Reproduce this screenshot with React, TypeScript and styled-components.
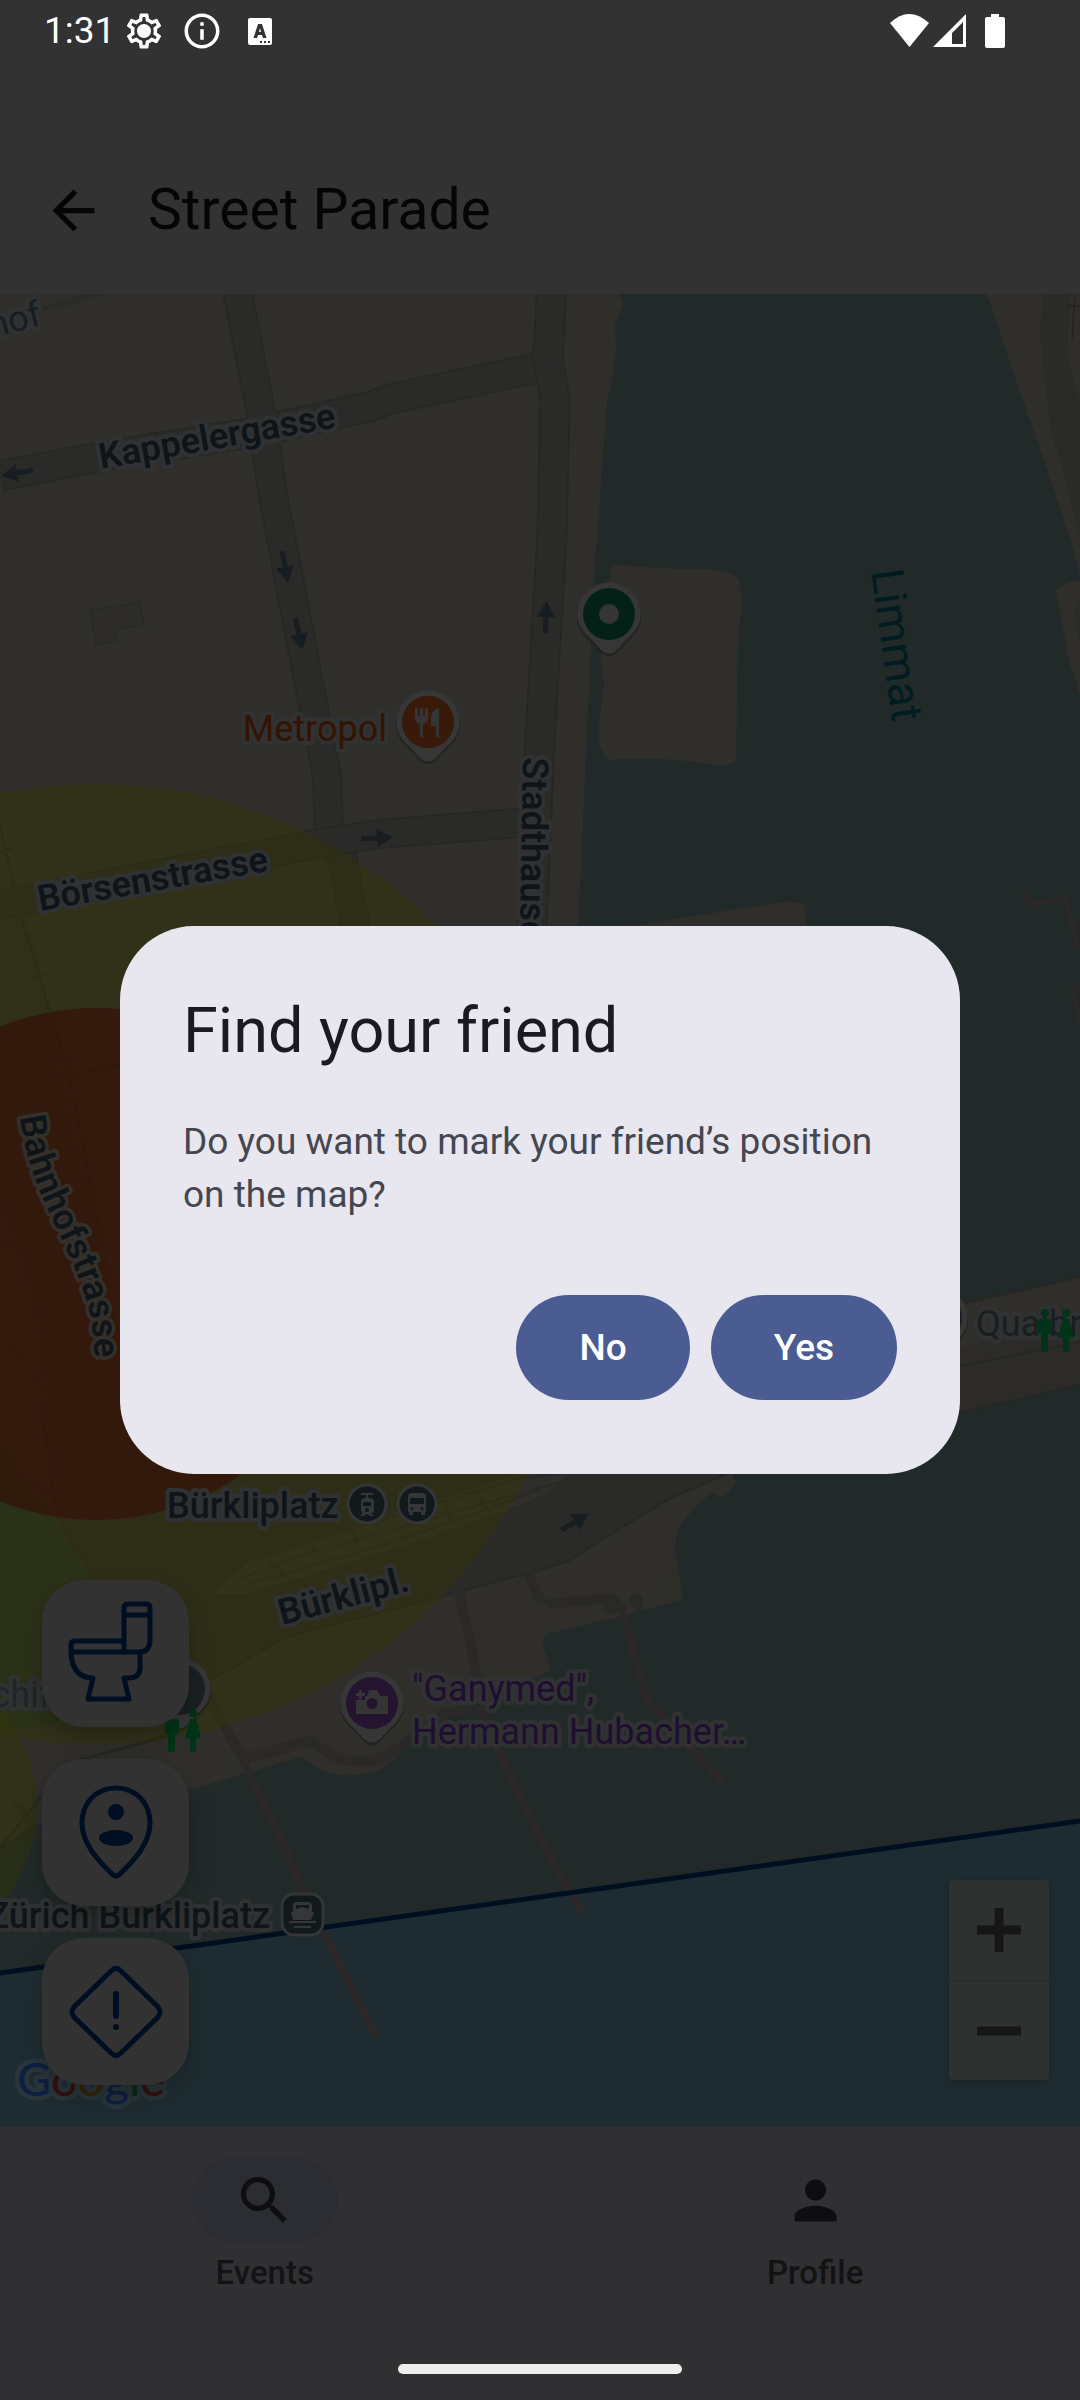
import React from "react";
import styled, { createGlobalStyle } from "styled-components";
import { MdArrowBack, MdInfoOutline, MdOutlineSettings, MdPerson, MdSearch } from "react-icons/md";

const color = {
  surface: "#323232",
  navSurface: "#303032",
  ink: "#050506",
  land: "#302e2b",
  water: "#212a29",
  lake: "#1e2c31",
  road: "#2a2a29",
  roadEdge: "#262723",
  path: "#2a2928",
  pier: "#2b2827",
  halo: "#303132",
  label: "#0e1418",
  primary: "#4a5c92",
  dialog: "#e8e6ef",
  icon: "#000e22",
};

const GlobalStyle = createGlobalStyle`
  *, *::before, *::after { box-sizing: border-box; }
  body {
    margin: 0;
    background: ${color.surface};
    color: ${color.ink};
    font-family: Roboto, "Noto Sans", sans-serif;
  }
  button { font: inherit; border: 0; padding: 0; margin: 0; background: none; cursor: pointer; }
  h1, h2, p { margin: 0; font-weight: 400; }
  svg { display: block; }
`;

const Screen = styled.div`
  min-height: 100vh;
  display: flex;
  flex-direction: column;
  background: ${color.surface};
`;

const StatusBar = styled.div`
  height: 126px;
  padding: 10px 74px 0 44px;
  display: flex;
  justify-content: space-between;
  align-items: flex-start;
  color: #fff;
`;

const StatusGroup = styled.div<{ $gap: number }>`
  display: flex;
  align-items: center;
  gap: ${(p) => p.$gap}px;
  height: 42px;
`;

const Clock = styled.span`
  font-size: 37px;
  line-height: 42px;
`;

const TopBar = styled.header`
  height: 168px;
  padding: 0 10px;
  display: flex;
  align-items: center;
  gap: 12px;
`;

const BackButton = styled.button`
  width: 126px;
  height: 126px;
  display: grid;
  place-items: center;
  color: ${color.ink};
`;

const Title = styled.h1`
  font-size: 57px;
  line-height: 74px;
`;

const MapArea = styled.main`
  position: relative;
  flex: 1 1 0;
  min-height: 1200px;
  overflow: hidden;
  background: ${color.water};
`;

const MapCanvas = styled.svg`
  position: absolute;
  inset: 0;
  width: 100%;
  height: 100%;
`;

const FabColumn = styled.div`
  position: absolute;
  left: 42px;
  bottom: 42px;
  display: flex;
  flex-direction: column;
  gap: 32px;
`;

const Fab = styled.button`
  width: 147px;
  height: 147px;
  border-radius: 42px;
  background: ${color.surface};
  box-shadow: 0 10px 22px rgba(0, 0, 0, 0.22);
  color: ${color.icon};
`;

const ZoomControl = styled.div`
  position: absolute;
  right: 31px;
  bottom: 47px;
  width: 100px;
  border-radius: 4px;
  background: #2d3130;
  box-shadow: 0 2px 6px rgba(0, 0, 0, 0.25);
  display: flex;
  flex-direction: column;
`;

const ZoomButton = styled.button`
  height: 100px;
  display: grid;
  place-items: center;
  color: #161616;

  & + & {
    border-top: 2px solid #292b2c;
  }
`;

const NavBar = styled.nav`
  height: 273px;
  padding-top: 31px;
  background: ${color.navSurface};
  display: flex;
  flex-direction: column;
  justify-content: space-between;
  align-items: center;
`;

const NavItems = styled.div`
  width: 100%;
  display: flex;
  gap: 21px;
`;

const NavItem = styled.a`
  flex: 1;
  display: flex;
  flex-direction: column;
  align-items: center;
  gap: 10px;
  color: #121315;
  text-decoration: none;
  font-size: 33px;
  font-weight: 500;
  line-height: 42px;
`;

const NavPill = styled.span<{ $active?: boolean }>`
  width: 147px;
  height: 84px;
  border-radius: 42px;
  display: grid;
  place-items: center;
  background: ${(p) => (p.$active ? "#2c2d32" : "transparent")};
  color: #0d0e11;
`;

const HomeHandle = styled.div`
  width: 284px;
  height: 10px;
  margin-bottom: 26px;
  border-radius: 5px;
  background: #eeeeee;
`;

const DialogLayer = styled.div`
  position: fixed;
  inset: 0;
  display: grid;
  place-items: center;
  padding: 0 120px;
`;

const Dialog = styled.section`
  width: 100%;
  max-width: 1470px;
  border-radius: 74px;
  padding: 63px 63px 74px;
  background: ${color.dialog};
  display: flex;
  flex-direction: column;
`;

const DialogTitle = styled.h2`
  font-size: 63px;
  line-height: 84px;
  color: #1a1b21;
`;

const DialogText = styled.p`
  margin: 42px 0 74px;
  font-size: 37px;
  line-height: 53px;
  color: #45464f;
`;

const DialogActions = styled.div`
  display: flex;
  justify-content: flex-end;
  gap: 21px;
`;

const DialogButton = styled.button`
  height: 105px;
  padding: 0 63px;
  border-radius: 53px;
  background: ${color.primary};
  color: #fff;
  font-size: 37px;
  font-weight: 500;
`;

type Point = [number, number];
const pts = (list: Point[]) => list.map((p) => p.join(",")).join(" ");

function Street({ points, width }: { points: Point[]; width: number }) {
  return (
    <g fill="none" strokeLinejoin="round">
      <polyline points={pts(points)} stroke={color.roadEdge} strokeWidth={width + 2} />
      <polyline points={pts(points)} stroke={color.road} strokeWidth={width - 1} />
    </g>
  );
}

function Label({
  x,
  y,
  angle = 0,
  size = 36,
  weight = 500,
  fill = color.label,
  anchor = "start",
  halo = color.halo,
  children,
}: {
  x: number;
  y: number;
  angle?: number;
  size?: number;
  weight?: number;
  fill?: string;
  anchor?: "start" | "middle" | "end";
  halo?: string;
  children: React.ReactNode;
}) {
  return (
    <text
      transform={`translate(${x} ${y}) rotate(${angle})`}
      fontSize={size}
      fontWeight={weight}
      fill={fill}
      textAnchor={anchor}
      stroke={halo}
      strokeWidth={8}
      strokeLinejoin="round"
      paintOrder="stroke"
    >
      {children}
    </text>
  );
}

function Arrow({ x, y, angle }: { x: number; y: number; angle: number }) {
  return (
    <path
      transform={`translate(${x} ${y}) rotate(${angle})`}
      d="M-16-2.500H0V-9L16 0L0 9V2.500H-16Z"
      fill="#171d21"
    />
  );
}

function Pin({ x, y, fill, children }: { x: number; y: number; fill: string; children?: React.ReactNode }) {
  return (
    <g transform={`translate(${x} ${y})`}>
      <path d="M-32 3A32 32 0 1 1 32 3C32 14 25 22 18 28L8 39Q0 46-8 39L-18 28C-25 22-32 14-32 3Z" fill="#1b1c1b" opacity="0.6" />
      <path d="M-31.500 0A31.500 31.500 0 1 1 31.500 0C31.500 12 25 19 18 25L8 36Q0 43-8 36L-18 25C-25 19-31.500 12-31.500 0Z" fill="#363637" />
      <circle r="26" fill={fill} />
      {children}
    </g>
  );
}

function Restroom({ x, y }: { x: number; y: number }) {
  return (
    <g transform={`translate(${x} ${y})`} fill="#003418">
      <circle cx="7" cy="4" r="4" />
      <path d="M2 10H12Q14 10 14 12V25H10V43H3V25H0V12Q0 10 2 10Z" />
      <circle cx="28" cy="4" r="4" />
      <path d="M25 10H31L36 29H31V43H25V29H20Z" />
    </g>
  );
}

function CityMap() {
  return (
    <MapCanvas viewBox="0 294 1080 1833" preserveAspectRatio="xMidYMid slice" role="img" aria-label="Map of Zürich Bürkliplatz">
      <rect y="0" width="1080" height="2400" fill={color.water} />

      {/* West bank */}
      <path
        fill={color.land}
        d="M0 294H619L623 305L615 325L616 351L613 376L607 402L594 576L583 821L578 930V1200L640 1380L732 1475L736 1483L723 1498L712 1492L693 1509L677 1530L675 1550L683 1600L643 1610L609 1619L564 1630L550 1633Q543 1635 543 1644L551 1670L520 1684L480 1695L445 1715L410 1746L382 1769Q350 1782 320 1769L300 1757L189 1790L60 1822L30 1826L0 1848Z"
      />
      {/* East bank and jetties */}
      <path fill={color.land} d="M986 294L991 306L1012 368L1050 478L1074 551L1080 578V294Z" />
      <path fill={color.land} d="M1080 580L1067 583L1056 590L1069 661L1080 694Z" />
      <path
        fill={color.land}
        d="M613 565L678 569H709Q730 571 738 578L742 596L738 649L736 759Q732 766 716 765L678 760Q640 757 609 760Q603 758 598 735L604 686L601 659L606 600L610 578Z"
      />
      <path fill={color.land} d="M620 928L781 902H794Q804 902 805 908L808 940H620Z" />

      {/* Lake */}
      <path fill={color.lake} d="M0 1973L1080 1821V2400H0Z" />

      {/* Parks */}
      <path fill="#262f29" d="M0 1440L40 1500L95 1580L150 1640L170 1690L60 1722L0 1735Z" />
      <path fill="#2d2e26" d="M664 1602Q668 1580 677 1565L683 1600Z" />

      {/* Quay bridge */}
      <path fill={color.land} d="M940 1310L1080 1276V1384L940 1418Z" />
      <path fill="#2c2b29" d="M940 1352L1080 1322V1384L940 1418Z" />
      <g stroke="#272623" strokeWidth="2" fill="none">
        <path d="M940 1309L1080 1277M940 1370L1080 1342M940 1418L1080 1384" />
      </g>

      {/* Streets */}
      <path d="M40 308L80 294H110L40 312Z" fill={color.road} />
      <path d="M1043 294L1040 330L1044 372L1050 425L1080 535V400L1068 360L1070 294Z" fill={color.road} />
      <path d="M1075 294L1072 340M1068 306H1080" stroke="#262522" strokeWidth="2" />
      <path d="M1080 600Q1070 610 1080 640Z" fill={color.road} />
      <Street width={29} points={[[0, 476], [93, 458], [255, 432], [372, 406], [390, 399], [550, 365]]} />
      <Street width={28} points={[[235, 280], [261, 412], [272, 490], [300, 637], [327, 776], [329, 833], [342, 857], [360, 950]]} />
      <Street width={28} points={[[-10, 908], [14, 902], [315, 844], [379, 834], [530, 822]]} />
      <Street width={29} points={[[552, 280], [548, 360], [555, 400], [552, 535], [540, 739], [531, 950]]} />
      <path fill={color.road} d="M250 408L260 405L278 414L276 425L260 432L248 428ZM322 838L340 834L350 842L346 852L330 852ZM538 356L548 352L558 368L548 382L536 372Z" />
      <path fill="#2d2c29" stroke={color.roadEdge} d="M90 611L140 602L144 625L114 630L117 642L96 645Z" />

      {/* Bahnhofstrasse corridor */}
      <path d="M8 930Q8 914 28 914L62 1080L108 1290L140 1400L230 1474L60 1474L30 1290L0 1200V1040Z" fill={color.road} opacity="0.45" />
      <g fill="none" stroke={color.roadEdge} strokeWidth="2">
        <path d="M0 826L14 888M22 918L69 1075L103 1247L122 1380" />
        <path d="M0 852L12 848M20 936L34 933M32 977L46 974M44 1018L58 1015M56 1060L72 1057M68 1103L80 1100M80 1146L92 1143M84 1188L96 1185M94 1232L106 1229M104 1274L114 1271" />
        <path d="M45 1082L122 1064M0 1218L90 1176M0 1246L50 1226M0 1330Q60 1420 120 1446M10 1474Q70 1500 140 1560" />
      </g>

      {/* Bürkliplatz carriageway */}
      <path
        d="M40 1400H732L727 1474L671 1498L626 1525L568 1561L540 1570L454 1593L286 1637L220 1675L190 1692L150 1640L95 1580L57 1519Z"
        fill={color.road}
        stroke={color.roadEdge}
        strokeWidth="2"
      />
      <path d="M207 1595L248 1561L520 1473H570L540 1498L502 1514L389 1552L248 1595Z" fill={color.land} />
      <g fill="none" stroke="#292926" strokeWidth="2">
        <path d="M207 1595L248 1561L520 1478L570 1473M207 1595H248L389 1552L502 1514L540 1498" />
        <path d="M235 1580L300 1556L560 1482M245 1585L400 1540L540 1490" />
        <path d="M268 1549L272 1562M311 1541L316 1554M352 1530L357 1544M405 1532L409 1544M444 1505L450 1519M478 1492L484 1505M487 1508L493 1522M278 1564L284 1578" />
      </g>
      <path d="M0 1848L40 1798L80 1760L170 1735" fill="none" stroke={color.roadEdge} strokeWidth="3" />

      {/* Footpaths */}
      <g fill="none" stroke={color.path} strokeWidth="10" strokeLinejoin="round">
        <path d="M458 1590L470 1640L479 1690M527 1572L542 1604M547 1604L612 1598L624 1612" />
        <path d="M205 1690L243 1759L310 1741L331 1755Q372 1772 406 1743L441 1715L472 1708" />
      </g>
      <g fill="#292925">
        <circle cx="610" cy="1608" r="7" />
        <circle cx="636" cy="1600" r="7" />
        <circle cx="638" cy="1606" r="5" />
        <circle cx="541" cy="1600" r="5" />
      </g>
      {/* Piers */}
      <g fill="none" stroke={color.pier} strokeWidth="8" strokeLinecap="round" strokeLinejoin="round">
        <path d="M243 1759L305 1893L375 2035" />
        <path d="M480 1708L540 1839L581 1910" />
        <path d="M623 1614L647 1700L721 1780" />
        <path d="M18 1806L42 1840" />
        <path strokeWidth="6" d="M1025 894L1029 904L1065 898L1078 945M1080 1020L1072 989L1080 987" />
      </g>

      {/* Event zones */}
      <circle cx="96" cy="1264" r="480" fill="#343400" opacity="0.4" />
      <circle cx="-114" cy="1807" r="151" fill="#343400" opacity="0.4" />
      <circle cx="96" cy="1264" r="256" fill="#360200" opacity="0.48" />

      <path d="M0 1973L1080 1821" stroke="#000e22" strokeWidth="5" />

      <Arrow x={17} y={473} angle={170} />
      <Arrow x={285} y={567} angle={80} />
      <Arrow x={299} y={634} angle={78} />
      <Arrow x={546} y={617} angle={-88} />
      <Arrow x={377} y={838} angle={-3} />
      <Arrow x={575} y={1522} angle={-31} />

      <g fontFamily='Roboto, "Noto Sans", sans-serif'>
        <Label x={43} y={325} angle={-14} weight={400} anchor="end" fill="#171d20">hof</Label>
        <Label x={101} y={469} angle={-10} weight={600}>Kappelergasse</Label>
        <Label x={40} y={911} angle={-10} weight={600}>Börsenstrasse</Label>
        <Label x={523} y={757} angle={91} weight={600}>Stadthausquai</Label>
        <Label x={871} y={571} angle={82} size={45} weight={400} fill="#011c20" halo="none">Limmat</Label>
        <Label x={387} y={741} weight={400} fill="#331400" anchor="end">Metropol</Label>
        <path id="bahnhof" d="M20 1117C31 1200 71 1240 89 1310Q95 1334 95 1380" fill="none" />
        <text fontSize="36" fontWeight="600" fill={color.label} stroke="#33302c" strokeWidth="7" strokeLinejoin="round" paintOrder="stroke">
          <textPath href="#bahnhof">Bahnhofstrasse</textPath>
        </text>
        <Label x={167} y={1518}>Bürkliplatz</Label>
        <Label x={282} y={1625} angle={-15} weight={600}>Bürklipl.</Label>
        <Label x={-30} y={1707} weight={400} fill="#1e2529">Schiff</Label>
        <Label x={412} y={1701} weight={400} fill="#1f0e2f">"Ganymed",</Label>
        <Label x={412} y={1744} weight={400} fill="#1f0e2f">Hermann Hubacher…</Label>
        <Label x={270} y={1928} anchor="end">Zürich Bürkliplatz</Label>
        <Label x={976} y={1336} weight={400} fill="#191e20">Quaibrücke</Label>
      </g>

      <Pin x={609} y={614} fill="#042118">
        <circle r="10" fill="#353535" />
      </Pin>
      <Pin x={428} y={722} fill="#38190a">
        <path fill="#353535" d="M-13-14H-10V-6H-8V-14H-5V-6H-3V-14H0V-5Q0 1-5 2V15H-8V2Q-13 1-13-5ZM11-14V15H8V4H3V-5Q4-13 11-14Z" />
      </Pin>
      <Pin x={372} y={1703} fill="#251430">
        <path fill="#353535" fillRule="evenodd" d="M-16-3H-7V-7H-5L-3-13H5L8-7H16V11H-16ZM0-5A5.500 5.500 0 1 0 0 6A5.500 5.500 0 1 0 0-5ZM-13-13H-10V-10H-7V-7H-10V-4H-13V-7H-16V-10H-13Z" />
      </Pin>
      <Pin x={179} y={1689} fill="#1a2023" />
      <Pin x={936} y={1318} fill="#1a2023" />

      <g fill="#12191d" stroke="#333536" strokeWidth="3">
        <circle cx="367" cy="1504" r="19" />
        <circle cx="417" cy="1504" r="19" />
        <rect x="282" y="1894" width="41" height="41" rx="12" />
      </g>
      <g fill="#353637">
        <path fillRule="evenodd" d="M361 1493H373V1495H368V1498Q374 1498 374 1502V1510Q374 1513 371 1513L374 1516H370L368 1514H366L364 1516H360L363 1513Q361 1513 361 1510V1502Q361 1498 366 1498V1495H361ZM363 1502V1506H371V1502ZM367 1508A2 2 0 1 0 367 1512A2 2 0 1 0 367 1508Z" />
        <path fillRule="evenodd" d="M411 1493H423Q426 1493 426 1497V1512H425V1515H421V1512H413V1515H409V1512H408V1497Q408 1493 411 1493ZM410 1498V1504H424V1498ZM412 1507A1.500 1.500 0 1 0 412 1510A1.500 1.500 0 1 0 412 1507ZM422 1507A1.500 1.500 0 1 0 422 1510A1.500 1.500 0 1 0 422 1507Z" />
        <path fillRule="evenodd" d="M296 1902H308Q312 1902 312 1906V1911L314 1913L311 1920H293L291 1913L293 1911V1906Q293 1902 296 1902ZM296 1905V1909L302 1907L309 1909V1905ZM289 1921H316V1923H289ZM294 1926H311V1928H294Z" />
      </g>
      <Restroom x={165} y={1709} />
      <Restroom x={1038} y={1309} />

      <text
        x="17"
        y="2096"
        fontFamily='Lato, "Open Sans", sans-serif'
        fontSize="47"
        fontWeight="500"
        stroke="#28353a"
        strokeWidth="9"
        strokeLinejoin="round"
        paintOrder="stroke"
      >
        <tspan fill="#0e1f42">G</tspan>
        <tspan fill="#33100d">o</tspan>
        <tspan fill="#332504">o</tspan>
        <tspan fill="#0e1f42">g</tspan>
        <tspan fill="#0b2814">l</tspan>
        <tspan fill="#33100d">e</tspan>
      </text>
    </MapCanvas>
  );
}

const fabStroke = {
  fill: "none",
  stroke: "currentColor",
  strokeWidth: 5,
  strokeLinecap: "round" as const,
  strokeLinejoin: "round" as const,
};

function ToiletIcon() {
  return (
    <svg viewBox="0 0 147 147" width="147" height="147" {...fabStroke}>
      <path d="M82 72V28Q82 24 86 24H104Q108 24 108 28V59Q108 72 98 72M82 35H108" />
      <path d="M82 61H33Q29 61 29 65V74Q31 98 51 98L46 119H87L82 98H86Q98 98 98 88V73M30 72H98" />
    </svg>
  );
}

function FriendIcon() {
  return (
    <svg viewBox="0 0 147 147" width="147" height="147" {...fabStroke}>
      <path d="M74 29C53 29 40 45 40 64C40 86 59 104 70 115Q74 119 78 115C89 104 108 86 108 64C108 45 95 29 74 29Z" />
      <circle cx="74" cy="53" r="8" fill="currentColor" stroke="none" />
      <ellipse cx="74" cy="79" rx="17" ry="8" fill="currentColor" stroke="none" />
    </svg>
  );
}

function HazardIcon() {
  return (
    <svg viewBox="0 0 147 147" width="147" height="147" {...fabStroke}>
      <path d="M69 33Q74 28 79 33L116 69Q120 74 116 79L79 115Q74 120 69 115L32 79Q28 74 32 69Z" />
      <path d="M74 56V78" strokeWidth="6" />
      <circle cx="74" cy="89" r="3" fill="currentColor" stroke="none" />
    </svg>
  );
}

export default function App() {
  return (
    <>
      <GlobalStyle />
      <Screen>
        <StatusBar>
          <StatusGroup $gap={8}>
            <Clock>1:31</Clock>
            <StatusGroup $gap={16}>
              <svg width="42" height="42" viewBox="0 0 42 42">
                <MdOutlineSettings size={42} />
                <circle cx="21" cy="21" r="6" fill="currentColor" />
              </svg>
              <MdInfoOutline size={42} />
              <svg width="42" height="42" viewBox="0 0 42 42">
                <path
                  fill="#fff"
                  fillRule="evenodd"
                  d="M11 8H31Q33 8 33 10V33Q33 35 31 35H11Q9 35 9 33V10Q9 8 11 8ZM19 14L14.500 28H18L19 25H23L24 28H27.500L23 14ZM20 22L21 18L22 22ZM21 31V33H23V31ZM25 31V33H27V31ZM29 31V33H31V31Z"
                />
              </svg>
            </StatusGroup>
          </StatusGroup>
          <StatusGroup $gap={4}>
            <svg width="39" height="34" viewBox="0 0 39 34" fill="#fff">
              <path d="M0 9Q19-9 39 9L19.500 33Z" />
            </svg>
            <svg width="33" height="34" viewBox="0 0 33 34" fill="#fff">
              <path fillRule="evenodd" d="M33 0V33H0ZM30 8L19 19V30H30Z" />
            </svg>
            <svg width="36" height="34" viewBox="0 0 36 34" fill="#fff">
              <path d="M21 0H29V3H33Q35 3 35 5V32Q35 34 33 34H17Q15 34 15 32V5Q15 3 17 3H21Z" />
            </svg>
          </StatusGroup>
        </StatusBar>

        <TopBar>
          <BackButton aria-label="Back">
            <MdArrowBack size={63} />
          </BackButton>
          <Title>Street Parade</Title>
        </TopBar>

        <MapArea>
          <CityMap />
          <FabColumn>
            <Fab aria-label="Toilets">
              <ToiletIcon />
            </Fab>
            <Fab aria-label="Find a friend">
              <FriendIcon />
            </Fab>
            <Fab aria-label="Report a hazard">
              <HazardIcon />
            </Fab>
          </FabColumn>
          <ZoomControl>
            <ZoomButton aria-label="Zoom in">
              <svg width="44" height="44" viewBox="0 0 44 44">
                <path d="M0 22H44M22 0V44" stroke="currentColor" strokeWidth="9" />
              </svg>
            </ZoomButton>
            <ZoomButton aria-label="Zoom out">
              <svg width="44" height="44" viewBox="0 0 44 44">
                <path d="M0 22H44" stroke="currentColor" strokeWidth="9" />
              </svg>
            </ZoomButton>
          </ZoomControl>
        </MapArea>

        <NavBar>
          <NavItems>
            <NavItem href="#events" aria-current="page">
              <NavPill $active>
                <MdSearch size={63} />
              </NavPill>
              Events
            </NavItem>
            <NavItem href="#profile">
              <NavPill>
                <MdPerson size={63} />
              </NavPill>
              Profile
            </NavItem>
          </NavItems>
          <HomeHandle />
        </NavBar>
      </Screen>

      <DialogLayer>
        <Dialog role="dialog" aria-modal="true" aria-labelledby="dialog-title">
          <DialogTitle id="dialog-title">Find your friend</DialogTitle>
          <DialogText>Do you want to mark your friend’s position on the map?</DialogText>
          <DialogActions>
            <DialogButton>No</DialogButton>
            <DialogButton>Yes</DialogButton>
          </DialogActions>
        </Dialog>
      </DialogLayer>
    </>
  );
}
